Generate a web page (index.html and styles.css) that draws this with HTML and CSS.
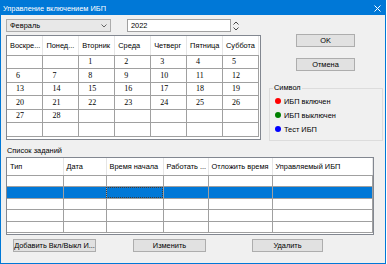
FILE: index.html
```html
<!DOCTYPE html>
<html lang="ru">
<head>
    <meta charset="UTF-8">
    <title>Управление включением ИБП</title>
    <link rel="stylesheet" href="styles.css">
</head>
<body>
    <div class="window">
        <div class="titlebar">
            <span class="title">Управление включением ИБП</span>
            <svg class="close" width="7" height="7" viewBox="0 0 7 7"><path d="M0.5 0.5 L6.5 6.5 M6.5 0.5 L0.5 6.5" stroke="#fff" stroke-width="1"/></svg>
        </div>

        <div class="main">
            <div class="left">
                <div class="controls">
                    <div class="select">
                        <span>Февраль</span>
                        <svg width="6" height="4" viewBox="0 0 6 4"><path d="M0.5 0.5 L3 3 L5.5 0.5" fill="none" stroke="#555" stroke-width="0.9"/></svg>
                    </div>
                    <div class="year">2022</div>
                    <div class="spin">
                        <svg width="6" height="4" viewBox="0 0 6 4"><path d="M0.5 3.5 L3 1 L5.5 3.5" fill="none" stroke="#333" stroke-width="0.9"/></svg>
                        <svg width="6" height="4" viewBox="0 0 6 4"><path d="M0.5 0.5 L3 3 L5.5 0.5" fill="none" stroke="#333" stroke-width="0.9"/></svg>
                    </div>
                </div>

                <div class="calendar">
                    <table class="cal">
                        <tr>
                            <th>Воскре...</th><th>Понед...</th><th>Вторник</th><th>Среда</th><th>Четверг</th><th>Пятница</th><th>Суббота</th>
                        </tr>
                        <tr><td></td><td></td><td>1</td><td>2</td><td>3</td><td>4</td><td>5</td></tr>
                        <tr><td>6</td><td>7</td><td>8</td><td>9</td><td>10</td><td>11</td><td>12</td></tr>
                        <tr><td>13</td><td>14</td><td>15</td><td>16</td><td>17</td><td>18</td><td>19</td></tr>
                        <tr><td>20</td><td>21</td><td>22</td><td>23</td><td>24</td><td>25</td><td>26</td></tr>
                        <tr><td>27</td><td>28</td><td></td><td></td><td></td><td></td><td></td></tr>
                        <tr><td></td><td></td><td></td><td></td><td></td><td></td><td></td></tr>
                    </table>
                </div>
            </div>

            <div class="right">
                <div class="btn btn-ok">OK</div>
                <div class="btn btn-cancel">Отмена</div>
                <div class="group">
                    <div class="legend">Символ</div>
                    <div class="legend-item first"><span class="dot red"></span>ИБП включен</div>
                    <div class="legend-item"><span class="dot green"></span>ИБП выключен</div>
                    <div class="legend-item"><span class="dot blue"></span>Тест ИБП</div>
                </div>
            </div>
        </div>

        <div class="tasks-label">Список заданий</div>
        <div class="tasks">
            <table class="task-table">
                <colgroup>
                    <col style="width:56px"><col style="width:43px"><col style="width:57px">
                    <col style="width:45px"><col style="width:64px"><col style="width:100px">
                </colgroup>
                <tr>
                    <th>Тип</th><th>Дата</th><th>Время начала</th><th>Работать ...</th><th>Отложить время</th><th>Управляемый ИБП</th>
                </tr>
                <tr><td></td><td></td><td></td><td></td><td></td><td></td></tr>
                <tr class="selected"><td></td><td></td><td class="focus"></td><td></td><td></td><td></td></tr>
                <tr><td></td><td></td><td></td><td></td><td></td><td></td></tr>
                <tr><td></td><td></td><td></td><td></td><td></td><td></td></tr>
                <tr><td></td><td></td><td></td><td></td><td></td><td></td></tr>
            </table>
        </div>

        <div class="actions">
            <div class="btn btn-add">Добавить Вкл/Выкл И...</div>
            <div class="btn btn-edit">Изменить</div>
            <div class="btn btn-delete">Удалить</div>
        </div>
    </div>
</body>
</html>
```

FILE: styles.css
```css
* {
    box-sizing: border-box;
}

body {
    margin: 0;
    background-color: #ffffff;
    font-family: "Liberation Sans", Arial, sans-serif;
    font-size: 7.4px;
    color: #000;
}

.window {
    width: 386px;
    height: 264px;
    border: 1px solid #0078d7;
    background-color: #f0f0f0;
    display: flex;
    flex-direction: column;
}

.titlebar {
    height: 14px;
    background-color: #0078d7;
    color: #fff;
    display: flex;
    align-items: center;
    justify-content: space-between;
    padding: 0 4px 0 2px;
}

.close {
    display: block;
}

/* calendar + buttons */
.main {
    display: flex;
    height: 126px;
}

.left {
    width: 255px;
    margin-left: 5px;
    padding-top: 4px;
}

.controls {
    display: flex;
    align-items: center;
    height: 13px;
}

.select {
    width: 105px;
    height: 13px;
    border: 1px solid #acacac;
    background-color: #e8e8e8;
    display: flex;
    align-items: center;
    justify-content: space-between;
    padding: 0 3px 0 3px;
}

.year {
    width: 104px;
    height: 13px;
    margin-left: 16px;
    border: 1px solid #a0a0a0;
    background-color: #fff;
    padding-left: 3px;
    line-height: 11px;
}

.spin {
    margin-left: 2px;
    display: flex;
    flex-direction: column;
    gap: 2px;
}

.spin svg {
    display: block;
}

.calendar {
    margin-top: 3px;
    width: 255px;
    height: 105px;
    border: 1px solid #828790;
    background-color: #fff;
    overflow: hidden;
}

.cal {
    border-collapse: collapse;
    table-layout: fixed;
    width: 252px;
}

.cal th {
    height: 19px;
    font-weight: normal;
    text-align: left;
    padding: 0 0 0 3px;
    white-space: nowrap;
    overflow: hidden;
    border-right: 1px solid #e5e5e5;
    border-bottom: 1px solid #a0a0a0;
}

.cal td {
    height: 13.5px;
    padding: 0 0 0 9px;
    font-family: "Liberation Serif", "Times New Roman", serif;
    font-size: 8px;
    border-right: 1px solid #a0a0a0;
    border-bottom: 1px solid #a0a0a0;
}

.right {
    flex: 1;
    padding-left: 8px;
}

.btn {
    height: 13px;
    background-color: #e1e1e1;
    border: 1px solid #adadad;
    display: flex;
    align-items: center;
    justify-content: center;
    white-space: nowrap;
}

.btn-ok {
    width: 59px;
    margin: 19px 0 0 27px;
}

.btn-cancel {
    width: 59px;
    margin: 11px 0 0 27px;
}

.group {
    margin-top: 17px;
    width: 114px;
    height: 53px;
    border: 1px solid #dcdcdc;
}

.legend {
    width: fit-content;
    margin: -6px 0 0 3px;
    padding: 0 1px;
    height: 10px;
    line-height: 10px;
    background-color: #f0f0f0;
}

.legend-item {
    height: 14px;
    display: flex;
    align-items: center;
    padding-left: 5px;
}

.legend-item.first {
    margin-top: 1px;
}

.dot {
    width: 6px;
    height: 6px;
    border-radius: 50%;
    margin-right: 3px;
}

.red { background-color: #ff0000; }
.green { background-color: #008000; }
.blue { background-color: #0000ff; }

/* task list */
.tasks-label {
    margin: 4px 0 0 6px;
    height: 11px;
    line-height: 11px;
}

.tasks {
    margin: 1px 0 0 5px;
    width: 368px;
    height: 78px;
    border: 1px solid #828790;
    background-color: #fff;
    overflow: hidden;
}

.task-table {
    border-collapse: collapse;
    table-layout: fixed;
    width: 365px;
}

.task-table th {
    height: 17px;
    font-weight: normal;
    text-align: left;
    padding: 0 0 0 3px;
    white-space: nowrap;
    overflow: hidden;
    border-right: 1px solid #e5e5e5;
    border-bottom: 1px solid #a0a0a0;
}

.task-table td {
    height: 11.6px;
    padding: 0;
    border-right: 1px solid #a0a0a0;
    border-bottom: 1px solid #a0a0a0;
}

.task-table .selected td {
    background-color: #0078d7;
}

.task-table .focus {
    outline: 1px dotted #3a3a3a;
    outline-offset: -1px;
}

.actions {
    display: flex;
    margin-top: 4px;
    padding-left: 12px;
}

.btn-add {
    width: 83px;
}

.btn-edit {
    width: 73px;
    margin-left: 37px;
}

.btn-delete {
    width: 71px;
    margin-left: 46px;
}
```
